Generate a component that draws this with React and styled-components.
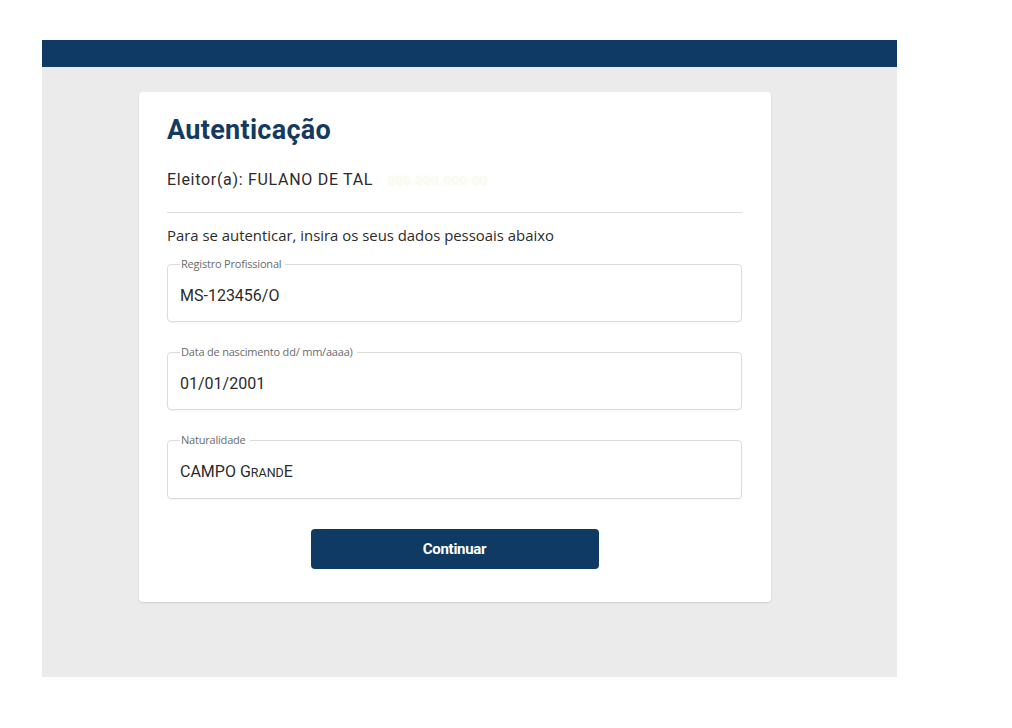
import React from 'react';
import styled, { createGlobalStyle } from 'styled-components';

const colors = {
  navy: '#0f3a63',
  title: '#153a60',
  backdrop: '#ebebeb',
  text: '#2b2b2b',
  muted: '#6b6b6b',
  line: '#dcdcdc',
};

const App = () => {
  const fields = [
    { label: 'Registro Profissional', value: 'MS-123456/O' },
    { label: 'Data de nascimento dd/ mm/aaaa)', value: '01/01/2001' },
    {
      label: 'Naturalidade',
      value: (
        <>
          CAMPO G<SmallStyle>RAND</SmallStyle>E
        </>
      ),
    },
  ];

  return (
    <>
      <GlobalStyle />
      <PageStyle>
        <FrameStyle>
          <TopBarStyle />
          <BackdropStyle>
            <CardStyle>
              <TitleStyle>Autenticação</TitleStyle>
              <VoterStyle>
                Eleitor(a): FULANO DE TAL
                <MaskedStyle>000.000.000-00</MaskedStyle>
              </VoterStyle>
              <DividerStyle />
              <HintStyle>Para se autenticar, insira os seus dados pessoais abaixo</HintStyle>

              <FieldListStyle>
                {fields.map(field => (
                  <FieldStyle key={field.label}>
                    <LegendStyle>{field.label}</LegendStyle>
                    <ValueStyle>{field.value}</ValueStyle>
                  </FieldStyle>
                ))}
              </FieldListStyle>

              <ButtonRowStyle>
                <ButtonStyle type="button">Continuar</ButtonStyle>
              </ButtonRowStyle>
            </CardStyle>
          </BackdropStyle>
        </FrameStyle>
      </PageStyle>
    </>
  );
};

const GlobalStyle = createGlobalStyle`
  html, body {
    margin: 0;
    background: #ffffff;
  }

  body {
    font-family: Roboto, "Liberation Sans", sans-serif;
  }
`;

const PageStyle = styled.div`
  padding: 40px 0 0 42px;
`;

const FrameStyle = styled.div`
  display: flex;
  flex-direction: column;

  width: 855px;
`;

const TopBarStyle = styled.div`
  height: 27px;

  background: ${colors.navy};
`;

const BackdropStyle = styled.div`
  height: 610px;
  padding: 25px 0 0 97px;
  box-sizing: border-box;

  background: ${colors.backdrop};
`;

const CardStyle = styled.div`
  display: flex;
  flex-direction: column;

  width: 632px;
  padding: 22px 29px 33px 28px;
  box-sizing: border-box;

  background: #ffffff;
  border-radius: 4px;
  box-shadow: 0 1px 2px rgba(0, 0, 0, 0.12);
`;

const TitleStyle = styled.h1`
  margin: 0;

  color: ${colors.title};
  font-weight: 700;
  font-size: 27px;
  line-height: 32px;
  letter-spacing: 0.3px;
`;

const VoterStyle = styled.p`
  margin: 24px 0 0;

  color: ${colors.text};
  font-size: 16px;
  line-height: 20px;
  letter-spacing: 0.7px;
`;

const MaskedStyle = styled.span`
  margin-left: 14px;

  color: #f1f5df;
  font-size: 13px;
  filter: blur(1px);
`;

const DividerStyle = styled.hr`
  margin: 21px 0 0;

  border: 0;
  border-top: 1px solid ${colors.line};
`;

const HintStyle = styled.p`
  margin: 12px 0 0;

  color: ${colors.text};
  font-family: "Open Sans", "Liberation Sans", sans-serif;
  font-size: 14.9px;
  line-height: 20px;
`;

const FieldListStyle = styled.div`
  display: flex;
  flex-direction: column;
  gap: 23px;

  margin-top: 12px;
`;

const FieldStyle = styled.fieldset`
  margin: 0;
  padding: 15px 12px 15px;

  border: 1px solid ${colors.line};
  border-radius: 4px;
  box-shadow: 0 1px 1px rgba(0, 0, 0, 0.04);
`;

const LegendStyle = styled.legend`
  padding: 0 4px 0 1px;

  color: ${colors.muted};
  font-family: "Open Sans", "Liberation Sans", sans-serif;
  font-size: 11px;
  line-height: 14px;
  letter-spacing: -0.2px;
`;

const ValueStyle = styled.div`
  color: ${colors.text};
  font-size: 16px;
  line-height: 20px;
`;

const SmallStyle = styled.span`
  font-size: 12.5px;
`;

const ButtonRowStyle = styled.div`
  display: flex;

  justify-content: center;
  margin-top: 30px;
`;

const ButtonStyle = styled.button`
  width: 288px;
  height: 40px;

  color: #ffffff;
  background: ${colors.navy};
  border: 0;
  border-radius: 4px;

  font-family: Roboto, "Liberation Sans", sans-serif;
  font-weight: 700;
  font-size: 15px;
  letter-spacing: -0.3px;
`;

export default App;
